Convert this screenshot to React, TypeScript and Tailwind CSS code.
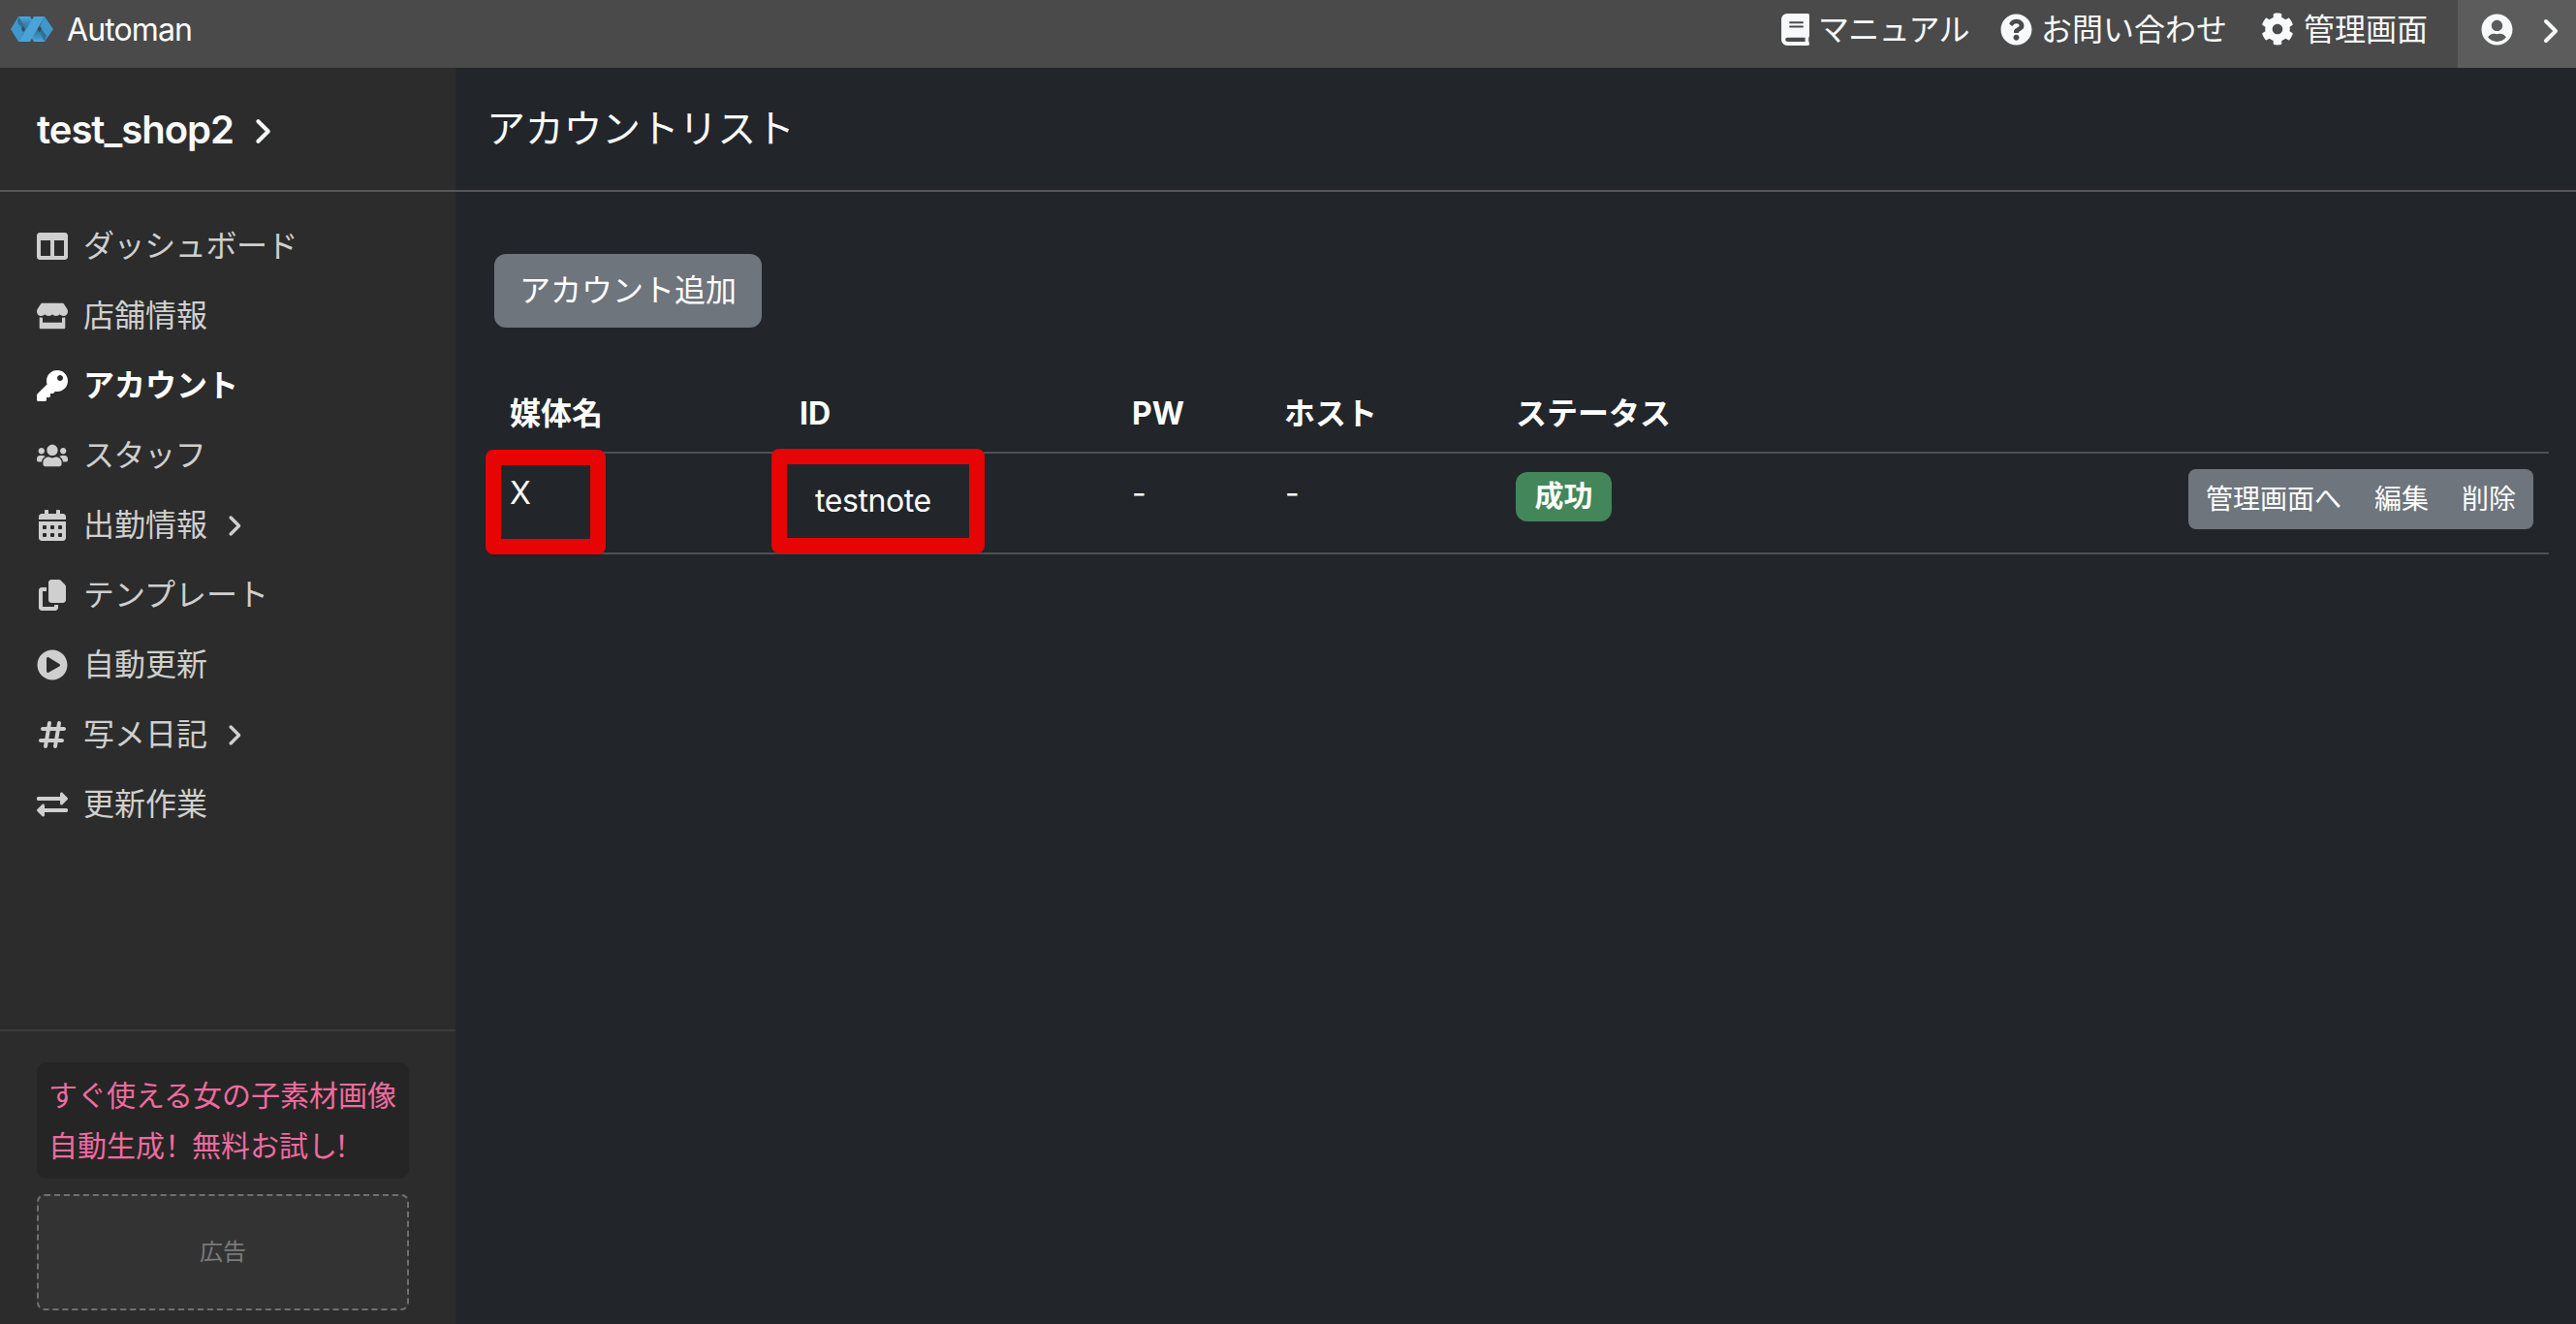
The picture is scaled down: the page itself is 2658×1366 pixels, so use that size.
import type { IconType } from "react-icons";
import {
  FaBook,
  FaCalendarAlt,
  FaCog,
  FaColumns,
  FaExchangeAlt,
  FaKey,
  FaPlayCircle,
  FaQuestionCircle,
  FaStore,
  FaUserCircle,
  FaUsers,
} from "react-icons/fa";
import { FaAngleRight, FaCopy, FaHashtag } from "react-icons/fa6";
import clsx from "clsx";

type MenuItem = {
  icon: IconType;
  label: string;
  active?: boolean;
  expandable?: boolean;
  kana?: boolean;
};

const menu: MenuItem[] = [
  { icon: FaColumns, label: "ダッシュボード", kana: true },
  { icon: FaStore, label: "店舗情報" },
  { icon: FaKey, label: "アカウント", active: true },
  { icon: FaUsers, label: "スタッフ", kana: true },
  { icon: FaCalendarAlt, label: "出勤情報", expandable: true },
  { icon: FaCopy, label: "テンプレート" },
  { icon: FaPlayCircle, label: "自動更新" },
  { icon: FaHashtag, label: "写メ日記", expandable: true },
  { icon: FaExchangeAlt, label: "更新作業" },
];

// Two folded ribbons crossing inside a hexagon
const Logo = () => (
  <svg className="h-[28px] w-[46px]" viewBox="-1 0 46 28">
    <defs>
      <linearGradient id="fold" x1="0" x2="0" y1="0" y2="1">
        <stop offset="0" stopColor="#4ba8dd" />
        <stop offset="0.5" stopColor="#2f6c90" />
        <stop offset="1" stopColor="#4ba8dd" />
      </linearGradient>
    </defs>
    <path d="M8 1h12l16 26H24z" fill="url(#fold)" />
    <path d="M0 14 8 1l6 10-2 3 2 3-6 10z" fill="#3f97cc" />
    <path d="m8 1 6 10-2 3-5-7z" fill="#2f7199" />
    <path d="M44 14 35 27l-5-10 2-3-2-3 5-10z" fill="#3f97cc" />
    <path d="m35 27-5-10 2-3 5 7z" fill="#2f7199" />
    <path d="M8 27 14 17l4-6-4-2-2 5 2 3z" fill="#357fab" />
    <path d="M24 1h11L20 27H8z" fill="#4aa4d8" />
    <path d="m13 11 2 3-2 3-2-3z" fill="#3c4a52" />
    <path d="m30 11 2 3-2 3-2-3z" fill="#3c4a52" />
  </svg>
);

const Header = () => (
  <header className="flex h-[70px] bg-[#4a4a4a] text-[32px] leading-[60px] text-[#f8f9fa]">
    <div className="flex h-[60px] items-center pl-[10px]">
      <Logo />
      <span className="ml-[13px] pt-[2px] tracking-[-0.9px] text-white">Automan</span>
    </div>
    <nav className="ml-auto flex h-[60px] items-center">
      <a className="mr-[32px] flex items-center">
        <FaBook className="h-[33px] w-[29px]" />
        <span className="ml-[9px] pt-px tracking-[-0.6px]">マニュアル</span>
      </a>
      <a className="mr-[35px] flex items-center">
        <FaQuestionCircle className="size-[33px]" />
        <span className="ml-[9px] pt-px">お問い合わせ</span>
      </a>
      <a className="mr-[31px] flex items-center">
        <FaCog className="size-[34px]" />
        <span className="ml-[10px] pt-px">管理画面</span>
      </a>
    </nav>
    <button className="flex h-[70px] w-[122px] items-center bg-[#5c5c5c] pb-[10px] pl-6">
      <FaUserCircle className="size-[33px]" />
      <FaAngleRight className="mt-[4px] ml-[22px] size-8" />
    </button>
  </header>
);

const Sidebar = () => (
  <aside className="flex w-[470px] shrink-0 flex-col bg-[#2c2c2c]">
    <div className="flex h-[128px] items-center border-b-2 border-[#565656] pl-[38px] text-[#f8f9fa]">
      <span className="pt-[2px] text-[40px] font-semibold tracking-[-1px]">test_shop2</span>
      <FaAngleRight className="mt-[4px] ml-[13px] size-[33px]" />
    </div>
    <ul className="mt-5 flex flex-col text-[32px] text-[#cfcfcf]">
      {menu.map(({ icon: Icon, label, active, expandable, kana }) => (
        <li
          key={label}
          className={clsx("flex h-18 items-center pl-[38px]", active && "font-bold text-white")}
        >
          <Icon className="size-8" />
          <span className={clsx("ml-4", kana && "tracking-[-0.4px]")}>{label}</span>
          {expandable && <FaAngleRight className="ml-[14px] size-[27px]" />}
        </li>
      ))}
    </ul>
    <div className="mt-auto flex flex-col gap-4 border-t-2 border-[#3d3d3d] px-[38px] pt-8 pb-[14px]">
      <div className="h-[120px] w-[384px] rounded-[10px] bg-[#252525] px-3 py-2 text-[30px] leading-[52px] whitespace-nowrap text-[#ef6b9f]">
        <div>すぐ使える女の子素材画像</div>
        <div>
          自動生成
          <span className="-mr-[2px] font-['Noto_Sans_CJK_SC',sans-serif] leading-none">！</span>
          無料お試し
          <span className="-ml-[3px] font-['Noto_Sans_CJK_SC',sans-serif] leading-none">！</span>
        </div>
      </div>
      <div className="flex h-[120px] w-[384px] items-center justify-center rounded-lg border-2 border-dashed border-[#707070] bg-[#333] text-2xl text-[#7b7b7b]">
        広告
      </div>
    </div>
  </aside>
);

const Marker = ({ className }: { className: string }) => (
  <div className={clsx("absolute rounded-lg border-16 border-[#e60404] shadow-sm", className)} />
);

const AccountTable = () => (
  <table className="mt-[56px] w-[2120px] table-fixed border-collapse text-left text-[32px] leading-[48px] text-white">
    <colgroup>
      <col className="w-[298px]" />
      <col className="w-[343px]" />
      <col className="w-[158px]" />
      <col className="w-[239px]" />
      <col className="w-[280px]" />
      <col />
    </colgroup>
    <thead>
      <tr className="h-[73px] border-b-2 border-[#4d5154] font-bold">
        <th className="px-4 pb-[6px]">媒体名</th>
        <th className="px-4 pb-[6px] pl-[17px]">ID</th>
        <th className="px-4 pb-[6px] pl-[17px]">PW</th>
        <th className="px-4 pb-[6px]">ホスト</th>
        <th className="px-4 pb-[6px]">ステータス</th>
        <th />
      </tr>
    </thead>
    <tbody>
      <tr className="h-[104px] border-b-2 border-[#4d5154] align-top">
        <td className="relative px-4 pt-[17px]">
          X
          <Marker className="top-[-4px] left-[-9px] h-[108px] w-[124px]" />
        </td>
        <td className="relative px-4 pt-[25px] pl-[33px] tracking-[-0.4px]">
          testnote
          <Marker className="top-[-5px] left-[-12px] h-[108px] w-[220px]" />
        </td>
        <td className="px-4 pt-[17px] pl-[17px]">-</td>
        <td className="px-4 pt-[17px] pl-[17px]">-</td>
        <td className="px-4 pt-[19px]">
          <span className="flex h-[51px] w-[99px] items-center justify-center rounded-xl bg-[#42865a] pb-[3px] text-[30px] leading-none font-bold">
            成功
          </span>
        </td>
        <td className="px-4 pt-4">
          <div className="ml-auto flex h-[62px] w-[356px] items-center rounded-lg bg-[#6e757d] pl-[18px] text-[28px]">
            <button>管理画面へ</button>
            <button className="ml-[34px]">編集</button>
            <button className="ml-[34px]">削除</button>
          </div>
        </td>
      </tr>
    </tbody>
  </table>
);

export default function App() {
  return (
    <div className="flex h-[1366px] w-[2658px] flex-col overflow-hidden bg-[#22262a] font-['Inter','Noto_Sans_CJK_JP',sans-serif]">
      <Header />
      <div className="flex flex-1">
        <Sidebar />
        <main className="flex-1 text-white">
          <div className="flex h-[128px] items-center border-b-2 border-[#565656] pl-[32px]">
            <h1 className="text-[40px] tracking-[-0.3px] text-[#f8f9fa]">アカウントリスト</h1>
          </div>
          <div className="pt-16 pl-10">
            <button className="h-[76px] w-[276px] rounded-xl bg-[#6e757d] text-[32px]">
              アカウント追加
            </button>
            <AccountTable />
          </div>
        </main>
      </div>
    </div>
  );
}
